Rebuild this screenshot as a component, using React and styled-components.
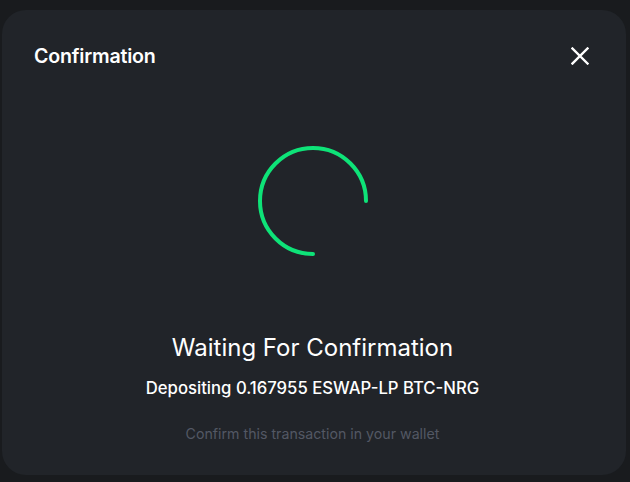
import styled, { createGlobalStyle } from "styled-components";

const GlobalStyle = createGlobalStyle`
  html, body {
    margin: 0;
    padding: 0;
    background: #191b1e;
    font-family: Inter, "Noto Sans", sans-serif;
  }
`;

const Backdrop = styled.div`
  width: 630px;
  height: 482px;
  padding: 10px 4px 7px 2px;
  box-sizing: border-box;
  background: #191b1e;
`;

const Modal = styled.div`
  height: 100%;
  background: #212429;
  border-radius: 24px;
  display: flex;
  flex-direction: column;
  padding: 35px 35px 31px 32px;
  box-sizing: border-box;
`;

const Header = styled.div`
  display: flex;
  align-items: center;
  justify-content: space-between;
  height: 22px;
`;

const Title = styled.h2`
  margin: 0;
  color: #ffffff;
  font-size: 19.6px;
  font-weight: 600;
  letter-spacing: -0.2px;
  line-height: 22px;
`;

const CloseButton = styled.button`
  border: none;
  background: none;
  padding: 0;
  width: 22px;
  height: 22px;
  display: flex;
  align-items: center;
  justify-content: center;
  cursor: pointer;
`;

const Body = styled.div`
  flex: 1;
  display: flex;
  flex-direction: column;
  align-items: center;
  padding-top: 78px;
`;

const Spinner = styled.svg`
  width: 112px;
  height: 112px;
  display: block;
`;

const Heading = styled.div`
  margin-top: 76px;
  color: #ffffff;
  font-size: 24px;
  line-height: 30px;
  font-weight: 400;
`;

const Detail = styled.div`
  margin-top: 15px;
  color: #ffffff;
  font-size: 16.7px;
  line-height: 20px;
  font-weight: 500;
`;

const Hint = styled.div`
  margin-top: 26px;
  color: #535864;
  font-size: 14.2px;
  line-height: 20px;
`;

export default function App() {
  return (
    <>
      <GlobalStyle />
      <Backdrop>
        <Modal>
          <Header>
            <Title>Confirmation</Title>
            <CloseButton aria-label="close">
              <svg width="18" height="18" viewBox="0 0 18 18">
                <path
                  d="M1.5 1.5 L16.5 16.5 M16.5 1.5 L1.5 16.5"
                  stroke="#ffffff"
                  strokeWidth="2.4"
                  strokeLinecap="square"
                />
              </svg>
            </CloseButton>
          </Header>
          <Body>
            <Spinner viewBox="0 0 112 112">
              <path
                d="M109 56 A53 53 0 1 0 56 109"
                fill="none"
                stroke="#0ee378"
                strokeWidth="4"
                strokeLinecap="round"
              />
            </Spinner>
            <Heading>Waiting For Confirmation</Heading>
            <Detail>Depositing 0.167955 ESWAP-LP BTC-NRG</Detail>
            <Hint>Confirm this transaction in your wallet</Hint>
          </Body>
        </Modal>
      </Backdrop>
    </>
  );
}
